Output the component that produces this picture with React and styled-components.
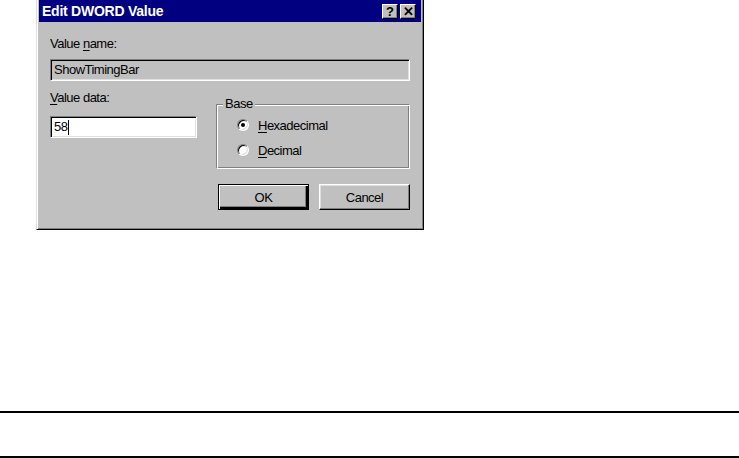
import React from "react";
import styled, { createGlobalStyle } from "styled-components";

const Global = createGlobalStyle`
  html, body { margin: 0; padding: 0; background: #fff; }
  body { font-family: "Liberation Sans", Arial, sans-serif; }
  #root { width: 739px; height: 458px; overflow: hidden; }
`;

const Page = styled.div`
  display: flex;
  flex-direction: column;
  width: 739px;
  height: 458px;
`;

const Dialog = styled.div`
  margin-left: 36px;
  width: 388px;
  height: 230px;
  box-sizing: border-box;
  background: #c0c0c0;
  border: 1px solid;
  border-top: none;
  border-color: #dfdfdf #000 #000 #dfdfdf;
  box-shadow: inset 1px 0 #fff, inset -1px -1px #808080;
  padding: 0 2px 2px 2px;
  display: flex;
  flex-direction: column;
`;

const TitleBar = styled.div`
  height: 22px;
  background: #000080;
  display: flex;
  align-items: center;
  padding: 0 5px 0 3px;
  gap: 2px;
`;

const TitleText = styled.div`
  flex: 1;
  color: #fff;
  font-weight: bold;
  font-size: 14px;
  letter-spacing: -0.25px;
`;

const CapButton = styled.div`
  width: 16px;
  height: 15px;
  box-sizing: border-box;
  background: #c0c0c0;
  border: 1px solid;
  border-color: #fff #000 #000 #fff;
  box-shadow: inset -1px -1px #808080;
  display: flex;
  align-items: center;
  justify-content: center;
  font-weight: bold;
  font-size: 13px;
  color: #000;
  line-height: 1;
`;

const Body = styled.div`
  padding: 15px 11px 0 11px;
  display: flex;
  flex-direction: column;
  font-size: 13px;
  letter-spacing: -0.5px;
  color: #000;
`;

const Label = styled.div`
  height: 14px;
  line-height: 14px;
`;

const Field = styled.div`
  box-sizing: border-box;
  height: 22px;
  width: ${(p) => p.$w || "auto"};
  margin-top: ${(p) => p.$mt || 0}px;
  background: ${(p) => (p.$readOnly ? "#c0c0c0" : "#fff")};
  border: 1px solid;
  border-color: #808080 #fff #fff #808080;
  box-shadow: inset 1px 1px #000, inset -1px -1px #dfdfdf;
  padding: 0 3px;
  display: flex;
  align-items: center;
  line-height: 14px;
`;

const Caret = styled.span`
  display: inline-block;
  width: 1px;
  height: 15px;
  background: #000;
  margin-left: 1px;
`;

const Row = styled.div`
  display: flex;
  margin-top: 10px;
`;

const LeftCol = styled.div`
  display: flex;
  flex-direction: column;
  width: 147px;
`;

const RightCol = styled.div`
  margin-left: 19px;
  width: 195px;
  display: flex;
  flex-direction: column;
`;

const Group = styled.div`
  position: relative;
  margin-top: 13px;
  width: 194px;
  height: 65px;
  box-sizing: border-box;
  border: 1px solid #808080;
  border-right-color: #fff;
  border-bottom-color: #fff;
  box-shadow: inset 1px 1px #fff, inset -1px -1px #808080;
  padding: 12px 0 0 20px;
  display: flex;
  flex-direction: column;
  gap: 9px;
`;

const Legend = styled.div`
  position: absolute;
  top: -8px;
  left: 6px;
  padding: 0 2px;
  background: #c0c0c0;
  line-height: 14px;
`;

const RadioRow = styled.div`
  display: flex;
  align-items: center;
  height: 16px;
  gap: 9px;
`;

const RadioCircle = styled.div`
  width: 12px;
  height: 12px;
  border-radius: 50%;
  box-sizing: border-box;
  background: #fff;
  border: 1px solid;
  border-color: #808080 #fff #fff #808080;
  box-shadow: inset 1px 1px #000, inset -1px -1px #dfdfdf;
  display: flex;
  align-items: center;
  justify-content: center;
  &::after {
    content: "";
    width: 4px;
    height: 4px;
    border-radius: 50%;
    background: ${(p) => (p.$checked ? "#000" : "transparent")};
  }
`;

const U = styled.span`
  text-decoration: underline;
  text-underline-offset: 2px;
`;

const Buttons = styled.div`
  display: flex;
  justify-content: flex-end;
  gap: 10px;
  margin-top: 15px;
`;

const Button = styled.div`
  width: 91px;
  height: 26px;
  box-sizing: border-box;
  border: 1px solid #000;
  ${(p) =>
    p.$default
      ? `box-shadow: inset 1px 1px #fff, inset -2px -2px #000, inset -3px -3px #808080;`
      : `border-color: #fff #000 #000 #fff; box-shadow: inset -1px -1px #808080, inset 1px 1px #dfdfdf;`}
  display: flex;
  align-items: center;
  justify-content: center;
  font-size: 13px;
`;

const Rule = styled.div`
  height: 2px;
  background: #000;
  margin-top: ${(p) => p.$mt}px;
`;

export default function App() {
  return (
    <Page>
      <Global />
      <Dialog>
        <TitleBar>
          <TitleText>Edit DWORD Value</TitleText>
          <CapButton>?</CapButton>
          <CapButton>✕</CapButton>
        </TitleBar>
        <Body>
          <Label>
            Value <U>n</U>ame:
          </Label>
          <Field $readOnly $mt={8}>ShowTimingBar</Field>
          <Row>
            <LeftCol>
              <Label>
                <U>V</U>alue data:
              </Label>
              <Field $mt={11} $w="147px">
                58
                <Caret />
              </Field>
            </LeftCol>
            <RightCol>
              <Group>
                <Legend>Base</Legend>
                <RadioRow>
                  <RadioCircle $checked />
                  <span>
                    <U>H</U>exadecimal
                  </span>
                </RadioRow>
                <RadioRow>
                  <RadioCircle />
                  <span>
                    <U>D</U>ecimal
                  </span>
                </RadioRow>
              </Group>
              <Buttons>
                <Button $default>OK</Button>
                <Button>Cancel</Button>
              </Buttons>
            </RightCol>
          </Row>
        </Body>
      </Dialog>
      <Rule $mt={181} />
      <Rule $mt={43} />
    </Page>
  );
}
